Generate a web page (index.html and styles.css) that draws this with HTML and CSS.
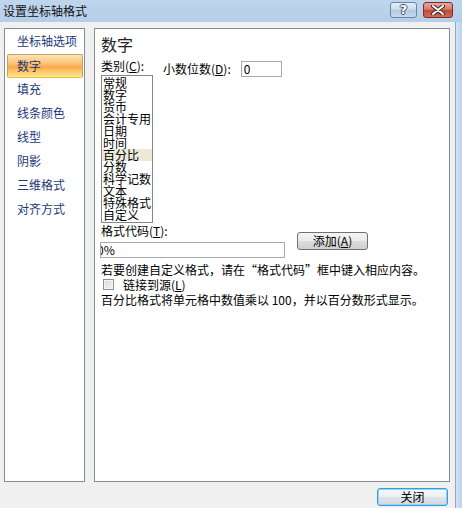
FILE: index.html
```html
<!DOCTYPE html>
<html lang="zh-CN">
<head>
<meta charset="utf-8">
<title>设置坐标轴格式</title>
<link rel="stylesheet" href="styles.css">
</head>
<body>
<div class="window">
  <div class="titlebar">
    <div class="title">设置坐标轴格式</div>
    <div class="tbtns">
      <div class="tbtn help"><span class="qmark">?</span></div>
      <div class="tbtn close">
        <svg width="14" height="10" viewBox="0 0 14 10">
          <path d="M2 1 L12 9 M12 1 L2 9" stroke="#3a2a28" stroke-width="4" stroke-linecap="round"/>
          <path d="M2 1 L12 9 M12 1 L2 9" stroke="#ffffff" stroke-width="2" stroke-linecap="round"/>
        </svg>
      </div>
    </div>
  </div>
  <div class="frame">
    <div class="client">
      <div class="panels">
        <div class="nav">
          <div class="nav-item">坐标轴选项</div>
          <div class="nav-item selected">数字</div>
          <div class="nav-item">填充</div>
          <div class="nav-item">线条颜色</div>
          <div class="nav-item">线型</div>
          <div class="nav-item">阴影</div>
          <div class="nav-item">三维格式</div>
          <div class="nav-item">对齐方式</div>
        </div>
        <div class="content">
          <div class="heading">数字</div>
          <div class="top-row">
            <div class="cat">
              <div class="label">类别(<u>C</u>):</div>
              <div class="listbox">
                <div class="li">常规</div>
                <div class="li">数字</div>
                <div class="li">货币</div>
                <div class="li">会计专用</div>
                <div class="li">日期</div>
                <div class="li">时间</div>
                <div class="li sel">百分比</div>
                <div class="li">分数</div>
                <div class="li">科学记数</div>
                <div class="li">文本</div>
                <div class="li">特殊格式</div>
                <div class="li">自定义</div>
              </div>
            </div>
            <div class="decimals">
              <div class="label">小数位数(<u>D</u>):</div>
              <div class="textbox small"><span>0</span></div>
            </div>
          </div>
          <div class="code-row">
            <div class="code-col">
              <div class="label">格式代码(<u>T</u>):</div>
              <div class="textbox wide"><span class="scrolled">0%</span></div>
            </div>
            <div class="btn add">添加(<u>A</u>)</div>
          </div>
          <div class="line hint">若要创建自定义格式，请在“格式代码”框中键入相应内容。</div>
          <div class="line check-row"><span class="checkbox"></span><span>链接到源(<u>L</u>)</span></div>
          <div class="line">百分比格式将单元格中数值乘以 100，并以百分数形式显示。</div>
        </div>
      </div>
      <div class="footer">
        <div class="btn default">关闭</div>
      </div>
    </div>
    <div class="edge"></div>
  </div>
</div>
</body>
</html>
```

FILE: styles.css
```css
html, body {
  margin: 0;
  padding: 0;
}
body {
  width: 462px;
  height: 508px;
  overflow: hidden;
  background: #f0f0f0;
  font-family: "Noto Sans CJK SC", "Liberation Sans", sans-serif;
  font-size: 12px;
  color: #000;
}
.window {
  display: flex;
  flex-direction: column;
  width: 462px;
  height: 508px;
}
.titlebar {
  height: 22px;
  flex: none;
  display: flex;
  align-items: flex-start;
  justify-content: space-between;
  background: linear-gradient(#bfd5ed, #b5cee8);
}
.title {
  padding-left: 3px;
  line-height: 22px;
  font-size: 12px;
  color: #111;
}
.tbtns {
  display: flex;
  gap: 6px;
  padding-top: 2px;
  padding-right: 9px;
}
.tbtn {
  height: 16px;
  box-sizing: border-box;
  border-radius: 3px;
  display: flex;
  align-items: center;
  justify-content: center;
}
.help {
  width: 27px;
  border: 1px solid #6c85a6;
  background: linear-gradient(#e4eef9 0%, #cbdcee 45%, #b3c9e2 50%, #c6d9ee 100%);
}
.qmark {
  font-family: "DejaVu Sans", sans-serif;
  font-weight: bold;
  font-size: 13px;
  line-height: 14px;
  color: #fff;
  text-shadow: -1px 0 #3f4f66, 1px 0 #3f4f66, 0 -1px #3f4f66, 0 1px #3f4f66;
}
.close {
  width: 30px;
  border: 1px solid #7a2e24;
  background: linear-gradient(#e9a99c 0%, #d7786a 45%, #c24a36 50%, #d06a52 100%);
}
.frame {
  flex: 1;
  display: flex;
}
.client {
  width: 455px;
  flex: none;
  display: flex;
  flex-direction: column;
  padding-top: 6px;
  box-sizing: border-box;
}
.edge {
  flex: 1;
  border-left: 1px solid #97a6b9;
  background: linear-gradient(to right, #d2e2f3, #bcd3ec);
}
.panels {
  display: flex;
  gap: 9px;
  padding-left: 4px;
  height: 454px;
}
.nav {
  width: 81px;
  box-sizing: border-box;
  border: 1px solid #878b94;
  background: #fff;
  padding: 0 1px 0 2px;
}
.nav-item {
  height: 24px;
  line-height: 24px;
  padding-left: 10px;
  color: #1c3877;
  box-sizing: border-box;
}
.nav-item.selected {
  margin-top: 1px;
  margin-bottom: -1px;
  border: 1px solid #c2a26a;
  border-bottom-color: #f2c02c;
  border-radius: 2px;
  line-height: 22px;
  padding-left: 9px;
  background: linear-gradient(#fde2b4 0%, #fbc77e 35%, #f8a94a 55%, #fccf73 80%, #fee58c 100%);
}
.content {
  width: 356px;
  box-sizing: border-box;
  border: 1px solid #878b94;
  background: #fff;
  padding: 5px 0 0 6px;
}
.heading {
  font-size: 16px;
  line-height: 20px;
  color: #222;
}
.label {
  line-height: 14px;
  white-space: nowrap;
}
.top-row {
  display: flex;
  margin-top: 5px;
}
.cat {
  width: 52px;
  display: flex;
  flex-direction: column;
}
.listbox {
  margin-top: 2px;
  width: 52px;
  height: 148px;
  box-sizing: border-box;
  border: 1px solid #828790;
  padding-top: 1px;
  overflow: hidden;
}
.li {
  height: 12px;
  line-height: 12px;
  padding-left: 1px;
  white-space: nowrap;
}
.li.sel {
  background: #ece9d8;
}
.decimals {
  display: flex;
  align-items: center;
  margin-left: 10px;
  margin-top: 2px;
  align-self: flex-start;
  gap: 10px;
}
.textbox {
  height: 16px;
  box-sizing: border-box;
  border: 1px solid #a9a9a9;
  background: #fff;
  line-height: 14px;
  overflow: hidden;
  white-space: nowrap;
}
.textbox.small {
  width: 41px;
  padding-left: 2px;
}
.textbox.wide {
  width: 185px;
  margin-left: -1px;
  margin-top: 3px;
}
.scrolled {
  display: inline-block;
  margin-left: -4px;
}
.code-row {
  display: flex;
  align-items: flex-start;
}
.code-col {
  display: flex;
  flex-direction: column;
}
.code-col .label {
  line-height: 16px;
}
.btn {
  width: 71px;
  height: 18px;
  box-sizing: border-box;
  border: 1px solid #707070;
  border-radius: 3px;
  background: linear-gradient(#f3f3f3 0%, #ebebeb 48%, #dddddd 52%, #cfcfcf 100%);
  text-align: center;
  line-height: 16px;
  white-space: nowrap;
}
.btn.add {
  margin-left: 12px;
  margin-top: 9px;
}
.line {
  line-height: 15px;
  white-space: nowrap;
}
.hint {
  margin-top: 4px;
}
.check-row {
  display: flex;
  align-items: center;
  padding-left: 2px;
  gap: 9px;
}
.checkbox {
  width: 11px;
  height: 11px;
  box-sizing: border-box;
  border: 1px solid #8e8f8f;
  background: linear-gradient(135deg, #d6d6d6, #f6f6f6);
  box-shadow: inset 0 0 0 1px #f4f4f4;
}
.footer {
  display: flex;
  justify-content: flex-end;
  padding-right: 7px;
  margin-top: 6px;
}
.btn.default {
  border: 1px solid #3c9ad8;
  box-shadow: inset 0 0 0 1px #8fd6f6;
  background: linear-gradient(#f5f9fc 0%, #ebf0f4 48%, #dde3e8 52%, #d3d9de 100%);
}
```
